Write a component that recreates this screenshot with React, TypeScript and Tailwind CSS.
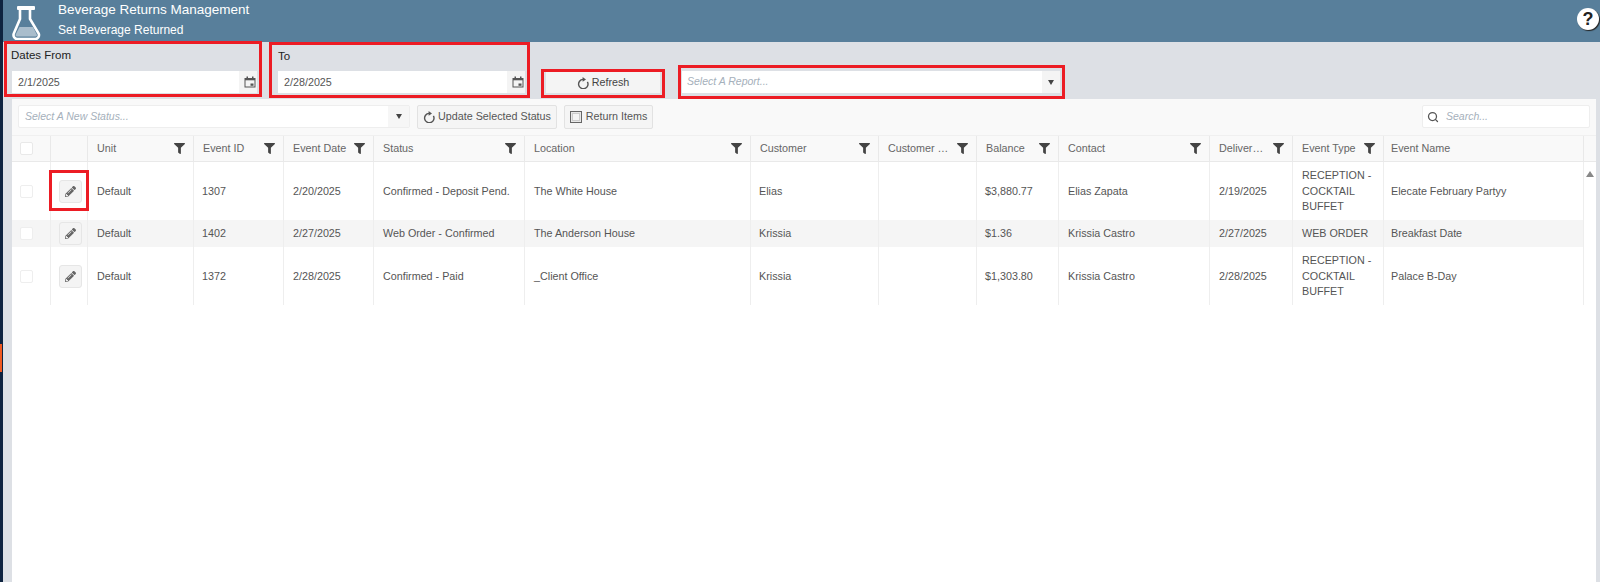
import { FaFilter, FaPencilAlt } from "react-icons/fa";
import { Search } from "lucide-react";

const gridCols =
  "grid grid-cols-[39px_37px_106px_90px_90px_151px_226px_128px_98px_82px_151px_83px_91px_200px]";

const Flask = () => (
  <svg viewBox="0 0 30 34" className="w-[30px] h-[34px] block">
    <rect x="5" y="0" width="18" height="4" rx="1" fill="#fff" />
    <path d="M8 4v9L1.800 27.500C0.800 30 2.500 33 5 33h18.500c2.500 0 4.200-3 3.200-5.500L18 13V4" fill="none" stroke="#fff" strokeWidth="2.600" />
    <path d="M7.500 21h13.500l3.800 7.500c0.400 1-0.200 2-1.300 2H5c-1.100 0-1.700-1-1.300-2z" fill="#a9bdcc" />
  </svg>
);

const Calendar = () => (
  <svg viewBox="0 0 12 12" className="w-[12px] h-[12px]">
    <path d="M2.500 0.500h1.500v1.500h4V0.500h1.500v1.500H11.500v9.500H0.500V2h2z" fill="#555" />
    <rect x="1.500" y="4.300" width="9" height="6.200" fill="#f4f4f4" />
    <rect x="6.500" y="7.500" width="3" height="2.300" fill="#555" />
  </svg>
);

const Refresh = ({ size = 12 }: { size?: number }) => (
  <svg viewBox="0 0 12 12" width={size} height={size} className="shrink-0">
    <path d="M10.400 4.800A4.700 4.700 0 1 1 6 2.400" fill="none" stroke="#555" strokeWidth="1.400" />
    <path d="M5.600 0 9 2.400 5.600 4.800z" fill="#555" />
  </svg>
);

const ReturnIcon = () => (
  <svg viewBox="0 0 12 12" className="w-[12px] h-[12px] shrink-0">
    <rect x="0.500" y="0.500" width="11" height="11" fill="#e8e8e8" stroke="#666" />
    <rect x="2.500" y="2.500" width="7" height="7" fill="#f5f5f5" stroke="#aaa" strokeDasharray="1 1" />
  </svg>
);

const Caret = () => <span className="w-0 h-0 border-x-[3.500px] border-x-transparent border-t-[5px] border-t-[#444]" />;

const HeaderCell = ({ label, filter = true, shift = false }: { label: string; filter?: boolean; shift?: boolean }) => (
  <div className="flex items-center justify-between pl-[9px] pr-[8px] border-r border-[#e9e9e9] text-[#666] min-w-0">
    <span className={shift ? "whitespace-nowrap -ml-[2px]" : "whitespace-nowrap"}>{label}</span>
    {filter && <FaFilter className="text-[#444] w-[11px] h-[11px] shrink-0 -mt-[1px]" />}
  </div>
);

const Cell = ({ children }: { children?: React.ReactNode }) => (
  <div className="flex items-center px-[9px] pt-[1px] border-r border-[#eeeeee] leading-[15.500px] min-w-0">{children}</div>
);

const Check = () => (
  <div className="flex items-center pl-[8px] border-r border-[#eeeeee]">
    <span className="block w-[13px] h-[13px] rounded-[2px] bg-white border border-[#eeeeee]" />
  </div>
);

type RowData = {
  id: string;
  date: string;
  status: string;
  location: string;
  customer: string;
  balance: string;
  contact: string;
  delivery: string;
  type: string;
  name: string;
};

const rows: RowData[] = [
  { id: "1307", date: "2/20/2025", status: "Confirmed - Deposit Pend.", location: "The White House", customer: "Elias", balance: "$3,880.77", contact: "Elias Zapata", delivery: "2/19/2025", type: "RECEPTION - COCKTAIL BUFFET", name: "Elecate February Partyy" },
  { id: "1402", date: "2/27/2025", status: "Web Order - Confirmed", location: "The Anderson House", customer: "Krissia", balance: "$1.36", contact: "Krissia Castro", delivery: "2/27/2025", type: "WEB ORDER", name: "Breakfast Date" },
  { id: "1372", date: "2/28/2025", status: "Confirmed - Paid", location: "_Client Office", customer: "Krissia", balance: "$1,303.80", contact: "Krissia Castro", delivery: "2/28/2025", type: "RECEPTION - COCKTAIL BUFFET", name: "Palace B-Day" },
];

const DataRow = ({ r, i }: { r: RowData; i: number }) => (
  <div className={`${gridCols} ${i === 1 ? "h-[27px] bg-[#f5f5f5]" : "h-[58px] bg-white"}`}>
    <Check />
    <div className="relative flex items-center justify-center pl-[2px] border-r border-[#eeeeee]">
      <span className="flex items-center justify-center w-[23px] h-[23px] rounded-[3px] bg-[#f4f4f4] border border-[#e6e6e6]">
        <FaPencilAlt className="w-[11px] h-[11px] text-[#666]" />
      </span>
      {i === 0 && <span className="absolute left-[-2px] top-[8px] w-[40px] h-[41px] border-[3px] border-[#ec1c24]" />}
    </div>
    <Cell>Default</Cell>
    <Cell><span className="-ml-[1px]">{r.id}</span></Cell>
    <Cell>{r.date}</Cell>
    <Cell><span className="whitespace-nowrap">{r.status}</span></Cell>
    <Cell>{r.location}</Cell>
    <Cell><span className="-ml-[1px]">{r.customer}</span></Cell>
    <Cell />
    <Cell><span className="-ml-[1px]">{r.balance}</span></Cell>
    <Cell>{r.contact}</Cell>
    <Cell>{r.delivery}</Cell>
    <Cell>{r.type}</Cell>
    <Cell><span className="-ml-[2px]">{r.name}</span></Cell>
  </div>
);

const DateField = ({ value }: { value: string }) => (
  <div className="flex h-[22px] bg-white">
    <div className="flex-1 flex items-center pl-[6px] text-[#555]">{value}</div>
    <div className="w-[18px] bg-[#f4f4f4] flex items-center justify-end pr-[1px]"><Calendar /></div>
  </div>
);

export default function App() {
  return (
    <div className="w-[1600px] h-[582px] overflow-hidden flex bg-[#dde0e5] font-[Liberation_Sans,Arial,sans-serif] text-[10.75px] text-[#555]">
      <div className="relative w-[3px] shrink-0 bg-[#0e2340]">
        <div className="absolute left-0 top-[344px] w-[2px] h-[28px] bg-[#f15a22]" />
      </div>
      <div className="flex-1 min-w-0 flex flex-col">
        <header className="h-[42px] shrink-0 bg-[#587f9b] flex items-start pl-[9px] pr-[1px] text-white">
          <div className="mt-[6px]"><Flask /></div>
          <div className="ml-[16px] flex flex-col">
            <span className="text-[13.500px] leading-[20px]">Beverage Returns Management</span>
            <span className="text-[12px] leading-[20px]">Set Beverage Returned</span>
          </div>
          <span className="ml-auto mt-[8px] flex items-center justify-center w-[22px] h-[22px] rounded-full bg-white text-[#222] text-[18px] font-bold shadow-[1px_1px_1px_#222]">?</span>
        </header>

        <div className="h-[57px] shrink-0 flex items-start">
          <div className="relative ml-[1px] -mt-[1px] w-[258px] h-[56px] border-[3px] border-[#ec1c24] pl-[5px] pr-[2px] flex flex-col">
            <label className="text-[11.500px] text-[#222] h-[27px] flex items-center pb-[3px] -ml-[1px]">Dates From</label>
            <DateField value="2/1/2025" />
          </div>
          <div className="ml-[7px] w-[261px] h-[56px] border-[3px] border-[#ec1c24] pl-[6px] pr-[2px] flex flex-col">
            <label className="text-[11.500px] text-[#222] h-[26px] flex items-center pb-[3px]">To</label>
            <DateField value="2/28/2025" />
          </div>
          <div className="ml-[11px] mt-[27px] w-[124px] h-[29px] border-[3px] border-[#ec1c24] px-[2px]">
            <button className="w-full h-[21px] bg-[#f4f4f4] flex items-center justify-center gap-[3px] text-[#444]">
              <Refresh /> Refresh
            </button>
          </div>
          <div className="ml-[13px] mt-[23px] w-[387px] h-[34px] border-[3px] border-[#ec1c24] pl-[1px] pr-[2px] pt-[3px]">
            <div className="flex h-[22px] bg-white">
              <div className="flex-1 flex items-center pl-[5px] italic text-[10.500px] text-[#a5b0bb]">Select A Report...</div>
              <div className="w-[18px] bg-[#f4f4f4] flex items-center justify-center"><Caret /></div>
            </div>
          </div>
        </div>

        <main className="flex-1 min-h-0 ml-[9px] mr-[4px] bg-white flex flex-col">
          <div className="h-[36px] shrink-0 bg-[#f9f9f9] flex items-center pl-[6px] pr-[6px] pb-[1px]">
            <div className="flex w-[392px] h-[23px] bg-white rounded-[2px] border border-[#eeeeee]">
              <div className="flex-1 flex items-center pl-[6px] italic text-[10.500px] text-[#a5b0bb]">Select A New Status...</div>
              <div className="w-[21px] bg-[#f6f6f6] flex items-center justify-center"><Caret /></div>
            </div>
            <button className="ml-[7px] w-[140px] h-[24px] rounded-[2px] bg-[#f5f5f5] border border-[#e2e2e2] flex items-center justify-center gap-[3px] whitespace-nowrap">
              <Refresh /> Update Selected Status
            </button>
            <button className="ml-[7px] w-[89px] h-[24px] rounded-[2px] bg-[#f5f5f5] border border-[#e2e2e2] flex items-center justify-center gap-[4px] whitespace-nowrap">
              <ReturnIcon /> Return Items
            </button>
            <div className="ml-auto w-[168px] h-[23px] bg-white rounded-[2px] border border-[#eeeeee] flex items-center pl-[4px]">
              <Search className="w-[12px] h-[12px] text-[#555]" strokeWidth={2.5} />
              <span className="ml-[7px] italic text-[10.500px] text-[#a5b0bb]">Search...</span>
            </div>
          </div>

          <div className="h-[27px] shrink-0 flex bg-[#f9f9f9] border-y border-[#e9e9e9] border-t-[#f0f0f0]">
            <div className={gridCols}>
              <div className="flex items-center pl-[8px] border-r border-[#e9e9e9]">
                <span className="block w-[13px] h-[13px] rounded-[2px] bg-white border border-[#e9e9e9]" />
              </div>
              <HeaderCell label="" filter={false} />
              <HeaderCell label="Unit" />
              <HeaderCell label="Event ID" />
              <HeaderCell label="Event Date" />
              <HeaderCell label="Status" />
              <HeaderCell label="Location" />
              <HeaderCell label="Customer" />
              <HeaderCell label="Customer …" />
              <HeaderCell label="Balance" />
              <HeaderCell label="Contact" />
              <HeaderCell label="Deliver…" />
              <HeaderCell label="Event Type" />
              <HeaderCell label="Event Name" filter={false} shift />
            </div>
          </div>

          <div className="flex-1 min-h-0 flex items-start">
            <div className="w-[1572px] shrink-0">
              {rows.map((r, i) => <DataRow key={r.id} r={r} i={i} />)}
            </div>
            <div className="flex-1 flex justify-center pt-[9px]">
              <span className="w-0 h-0 border-x-[4px] border-x-transparent border-b-[6px] border-b-[#888]" />
            </div>
          </div>
        </main>
      </div>
    </div>
  );
}
